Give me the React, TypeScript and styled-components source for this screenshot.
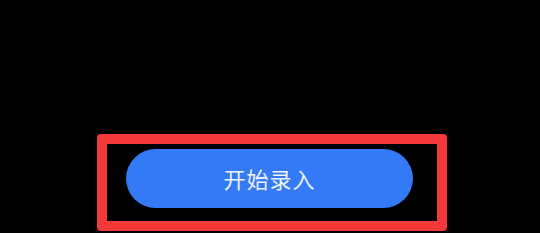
import styled, { createGlobalStyle } from "styled-components";

const GlobalStyle = createGlobalStyle`
html, body {
    margin: 0;
    padding: 0;
    background: #000000;
}
body {
    font-family: "Noto Sans CJK SC", "Noto Sans", sans-serif;
}
`;

const Page = styled.div`
width: 540px;
height: 233px;
display: flex;
align-items: flex-end;
padding: 0 0 2px 97px;
box-sizing: border-box;
background: #000000;
`;

const Frame = styled.div`
display: flex;
align-items: flex-start;
width: 350px;
height: 97px;
box-sizing: border-box;
border: 10px solid #F4393B;
border-radius: 4px;
padding: 5px 24px 0 19px;
`;

const StartButton = styled.button`
width: 287px;
height: 59px;
border: none;
border-radius: 30px;
background: #3479F5;
color: #EEF2FB;
font-family: "Noto Sans CJK SC", "Noto Sans", sans-serif;
font-size: 22px;
font-weight: 400;
letter-spacing: 1px;
display: flex;
align-items: center;
justify-content: center;
padding: 0 0 2px 0;
cursor: pointer;
`;

const App = () => {
    return (
        <>
            <GlobalStyle />
            <Page>
                <Frame>
                    <StartButton>开始录入</StartButton>
                </Frame>
            </Page>
        </>
    );
};

export default App;
